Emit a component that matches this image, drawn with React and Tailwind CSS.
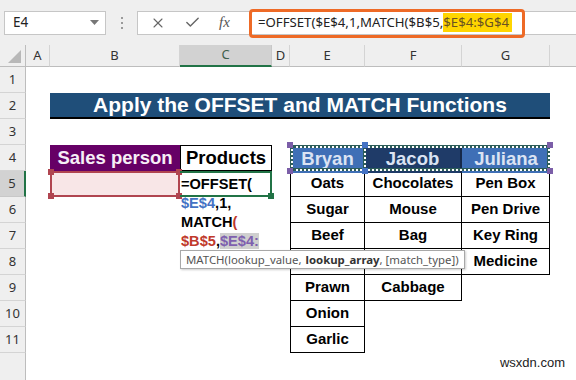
import { X, Check } from 'lucide-react';

const UI = "font-['Noto_Sans','Open_Sans',sans-serif]";

function ColHead({ label, active, last }) {
  if (active) {
    return (
      <div className={`flex items-center justify-center bg-[#d2d2d2] border-r border-[#c8c8c8] border-b-2 border-b-[#217346] text-[13px] text-[#3f5f4c] ${UI}`}>
        {label}
      </div>
    );
  }
  return (
    <div className={`flex items-center justify-center bg-[#efefef] ${last ? '' : 'border-r border-[#d4d4d4]'} border-b border-b-[#bdbdbd] text-[13px] text-[#333] ${UI}`}>
      {label}
    </div>
  );
}

function RowHead({ n, active }) {
  if (active) {
    return (
      <div className={`flex items-center justify-center bg-[#d2d2d2] border-b border-[#c8c8c8] border-r-2 border-r-[#217346] text-[13px] text-[#333] ${UI}`}>
        {n}
      </div>
    );
  }
  return (
    <div className={`flex items-center justify-center bg-[#efefef] border-b border-[#d4d4d4] border-r border-r-[#bdbdbd] text-[13px] text-[#333] ${UI}`}>
      {n}
    </div>
  );
}

function Handle({ className }) {
  return <span className={`absolute w-[6px] h-[6px] ${className}`} />;
}

// data cell in the E:G table
function Item({ children, first, bottomless }) {
  return (
    <div className={`flex items-center justify-center border-r ${bottomless ? '' : 'border-b'} ${first ? 'border-l' : ''} border-black text-[15px] font-bold text-black`}>
      {children}
    </div>
  );
}

function Blank() {
  return <div />;
}

export default function App() {
  return (
    <div className="relative w-[576px] h-[380px] overflow-hidden bg-white font-['Liberation_Sans',Arial,sans-serif]">
      {/* formula bar */}
      <div className="flex items-center h-[45px] bg-[#efefef] pl-[4px]">
        <div className={`flex items-center justify-between w-[102px] h-[24px] bg-white border border-[#c6c6c6] pl-[8px] pr-[6px] text-[13.5px] text-[#222] ${UI}`}>
          <span>E4</span>
          <svg width="9" height="5" viewBox="0 0 9 5"><polygon points="0,0 9,0 4.5,5" fill="#777" /></svg>
        </div>
        <div className="flex flex-col items-center justify-center gap-[3px] w-[31px]">
          <span className="w-[2px] h-[2px] bg-[#9a9a9a]" />
          <span className="w-[2px] h-[2px] bg-[#9a9a9a]" />
          <span className="w-[2px] h-[2px] bg-[#9a9a9a]" />
        </div>
        <div className="flex items-center w-[113px] h-[24px] bg-white border border-[#c6c6c6] pl-[12px] gap-[18px]">
          <X size={16} strokeWidth={1.6} color="#666" />
          <Check size={17} strokeWidth={2} color="#666" />
          <span className="font-['Liberation_Serif',serif] italic text-[15px] text-[#555]">fx</span>
        </div>
        <div className="relative flex-1 h-[24px] bg-white border-y border-[#c6c6c6]">
          <div className={`flex items-center h-full pl-[8px] text-[13.2px] text-[#222] whitespace-nowrap ${UI}`}>
            <span>=OFFSET($E$4,1,MATCH($B$5,</span>
            <span className="bg-[#ffd500] text-[#6a5222] pr-[3px]">$E$4:$G$4</span>
          </div>
          <div className="absolute -left-[1px] -top-[3px] w-[276px] h-[29px] border-[3px] border-[#ee6a26] rounded-[4px]" />
        </div>
      </div>

      {/* sheet */}
      <div className="grid grid-cols-[26px_24px_130px_92px_18px_75px_97px_88px_1fr] grid-rows-[22px_repeat(11,26px)_1fr] h-[335px]">
        {/* column headers */}
        <div className="relative bg-[#efefef] border-r border-b border-[#bdbdbd]">
          <svg className="absolute right-[4px] bottom-[3px]" width="13" height="13" viewBox="0 0 13 13"><polygon points="13,0 13,13 0,13" fill="#b8b8b8" /></svg>
        </div>
        <ColHead label="A" />
        <ColHead label="B" />
        <ColHead label="C" active />
        <ColHead label="D" />
        <ColHead label="E" />
        <ColHead label="F" />
        <ColHead label="G" />
        <ColHead label="" last />

        {/* row 1 */}
        <RowHead n={1} />
        <div className="col-span-8" />

        {/* row 2 */}
        <RowHead n={2} />
        <Blank />
        <div className="col-span-6 flex items-center justify-center bg-[#1f4e79] border-b-2 border-black text-white text-[21px] font-bold">
          Apply the OFFSET and MATCH Functions
        </div>
        <Blank />

        {/* row 3 */}
        <RowHead n={3} />
        <div className="col-span-8" />

        {/* row 4 */}
        <RowHead n={4} />
        <Blank />
        <div className="flex items-center justify-center bg-[#660066] text-[#f6eef6] text-[18.5px] font-bold">Sales person</div>
        <div className="flex items-center justify-center border border-black text-[18.5px] font-bold text-black">Products</div>
        <Blank />
        <div className="relative col-span-3 grid grid-cols-[75px_97px_88px]">
          <div className="flex items-center justify-center bg-[#3f6fb6] text-[#dbe3f3] text-[18.5px] font-bold">Bryan</div>
          <div className="flex items-center justify-center bg-[#1f3b68] text-[#dbe3f3] text-[18.5px] font-bold border-r-2 border-[#16294a]">Jacob</div>
          <div className="flex items-center justify-center bg-[#3f6fb6] text-[#dbe3f3] text-[18.5px] font-bold">Juliana</div>
          {/* marching ants around E4:G4 */}
          <div className="absolute inset-0 border-[3px] border-[#2c5c58]" />
          <div className="absolute inset-[0.5px] border-2 border-dotted border-white" />
          <div className="absolute left-[73px] top-0 bottom-0 w-[3px] bg-[#2c5c58]" />
          <div className="absolute left-[73.5px] top-0 bottom-0 border-l-2 border-dotted border-white" />
          <Handle className="-left-[3px] -top-[3px] bg-[#7b5ea8]" />
          <Handle className="-right-[3px] -top-[3px] bg-[#7b5ea8]" />
          <Handle className="-left-[3px] -bottom-[3px] bg-[#7b5ea8]" />
          <Handle className="-right-[3px] -bottom-[3px] bg-[#7b5ea8]" />
          <Handle className="left-[72px] -top-[3px] bg-[#4472c4]" />
          <Handle className="left-[72px] -bottom-[3px] bg-[#4472c4]" />
        </div>
        <Blank />

        {/* row 5 */}
        <RowHead n={5} active />
        <Blank />
        <div className="relative bg-[#f8e6e7] border-2 border-[#b04550]">
          <Handle className="-left-[4px] -top-[4px] bg-[#b04550]" />
          <Handle className="-right-[4px] -top-[4px] bg-[#b04550]" />
          <Handle className="-left-[4px] -bottom-[4px] bg-[#b04550]" />
          <Handle className="-right-[4px] -bottom-[4px] bg-[#b04550]" />
        </div>
        <div className="relative border-2 border-l-0 border-[#217346]">
          <Handle className="-right-[4px] -bottom-[4px] bg-[#217346]" />
          <div className="absolute z-10 left-[1px] top-[2px] text-[14.6px] font-bold leading-[19px] whitespace-nowrap text-black">
            <div>=OFFSET(</div>
            <div><span className="text-[#4472c4]">$E$4</span>,1,</div>
            <div>MATCH<span className="text-[#c0392b]">(</span></div>
            <div><span className="text-[#c0392b]">$B$5</span>,<span className="bg-[#cfcfcf] text-[#7e5fae]">$E$4:</span></div>
          </div>
        </div>
        <Blank />
        <Item first>Oats</Item>
        <Item>Chocolates</Item>
        <Item>Pen Box</Item>
        <Blank />

        {/* row 6 */}
        <RowHead n={6} />
        <Blank /><Blank /><Blank /><Blank />
        <Item first>Sugar</Item>
        <Item>Mouse</Item>
        <Item>Pen Drive</Item>
        <Blank />

        {/* row 7 */}
        <RowHead n={7} />
        <Blank /><Blank /><Blank /><Blank />
        <Item first>Beef</Item>
        <Item>Bag</Item>
        <Item>Key Ring</Item>
        <Blank />

        {/* row 8 */}
        <RowHead n={8} />
        <Blank /><Blank /><Blank /><Blank />
        <Item first />
        <Item />
        <Item>Medicine</Item>
        <Blank />

        {/* row 9 */}
        <RowHead n={9} />
        <Blank /><Blank /><Blank /><Blank />
        <Item first>Prawn</Item>
        <Item>Cabbage</Item>
        <Blank />
        <Blank />

        {/* row 10 */}
        <RowHead n={10} />
        <Blank /><Blank /><Blank /><Blank />
        <Item first>Onion</Item>
        <Blank /><Blank /><Blank />

        {/* row 11 */}
        <RowHead n={11} />
        <Blank /><Blank /><Blank /><Blank />
        <Item first>Garlic</Item>
        <Blank /><Blank /><Blank />

        {/* rest */}
        <div className="bg-[#efefef] border-r border-[#bdbdbd]" />
        <div className="col-span-8" />
      </div>

      {/* function tooltip */}
      <div className={`absolute z-20 left-[180px] top-[250px] h-[19px] flex items-center px-[5px] bg-white border border-[#a8a8a8] shadow-[1px_1px_2px_rgba(0,0,0,0.2)] text-[11.4px] text-[#555] whitespace-nowrap ${UI}`}>
        MATCH(lookup_value, <b className="text-[#333] ml-[4px]">lookup_array</b>, [match_type])
      </div>

      <div className="absolute right-[11px] bottom-[8px] text-[13px] text-[#222]">wsxdn.com</div>
    </div>
  );
}
